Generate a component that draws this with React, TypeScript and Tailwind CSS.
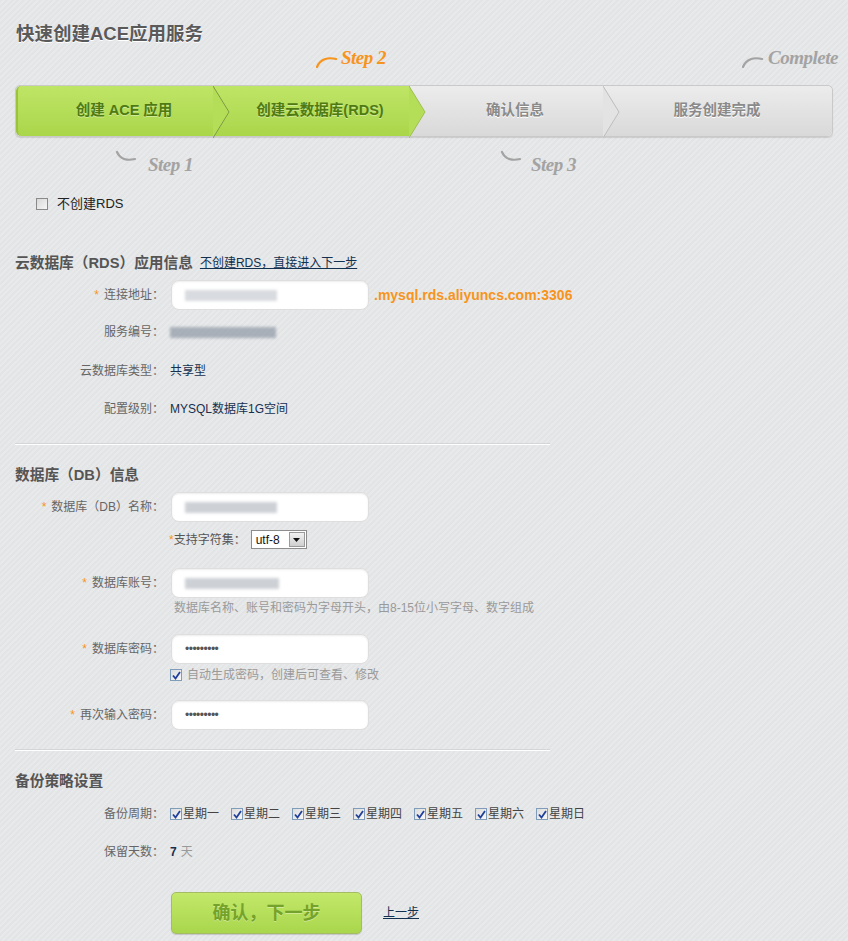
import React from "react";

const Star = () => <span className="text-[#f7941d] mr-[5px]">*</span>;

function Box({ checked }: { checked?: boolean }) {
  return (
    <span className="inline-flex items-center justify-center w-[12px] h-[12px] border border-[#7f9db9] bg-gradient-to-br from-[#dcdcdc] to-[#f8f8f8] shrink-0">
      {checked && (
        <svg width="9" height="9" viewBox="0 0 9 9">
          <path d="M1 4.5 L3.5 7.5 L8 1" fill="none" stroke="#21409a" strokeWidth="1.8" />
        </svg>
      )}
    </span>
  );
}

function Input({ children }: { children?: React.ReactNode }) {
  return (
    <div className="ml-px w-[198px] h-[30px] rounded-[8px] bg-white border border-[#dedede] shadow-[inset_0_1px_2px_rgba(0,0,0,0.08)] flex items-center px-[13px]">
      {children}
    </div>
  );
}

function Row({ label, req, className, children }: { label: string; req?: boolean; className?: string; children: React.ReactNode }) {
  return (
    <div className={"flex items-center " + (className || "")}>
      <div className="w-[164px] text-right text-[12px] text-[#666] whitespace-nowrap">
        {req && <Star />}
        {label}
      </div>
      <div className="ml-[6px] flex items-center text-[12px]">{children}</div>
    </div>
  );
}

const Blur = ({ w, c = "#9aa0a8" }: { w: number; c?: string }) => (
  <div className="h-[11px] blur-[1.5px] opacity-70" style={{ width: w, backgroundColor: c }} />
);

const Dots = () => <span className="text-[#555] text-[12px] tracking-[-0.5px] leading-none">•••••••••</span>;

function Chevron({ fill, stroke }: { fill: string; stroke: string }) {
  return (
    <svg className="absolute top-0 right-[-16px] z-10" width="17" height="52" viewBox="0 0 17 52">
      <polygon points="0,0 16,26 0,52" fill={fill} />
      <polyline points="0,0 16,26 0,52" fill="none" stroke={stroke} strokeWidth="1" />
    </svg>
  );
}

const hand = "font-['Liberation_Serif',serif] italic font-bold whitespace-nowrap tracking-[-0.5px]";

export default function App() {
  const days = ["星期一", "星期二", "星期三", "星期四", "星期五", "星期六", "星期日"];
  return (
    <div className="min-h-screen w-full bg-[repeating-linear-gradient(135deg,#e3e4e5_0px,#e3e4e5_2px,#e8e9ea_2px,#e8e9ea_4px)] font-['Liberation_Sans','Noto_Sans_CJK_SC',sans-serif] text-[#333] pb-[10px]">
      <h1 className="pl-[16px] pt-[22px] leading-[24px] text-[18.5px] font-bold text-[#5a5a5a] [text-shadow:0_1px_0_#fff]">
        快速创建ACE应用服务
      </h1>

      {/* top annotations */}
      <div className="flex h-[39px] items-start pt-[2px]">
        <div className="ml-[316px] w-[80px] flex items-end">
          <svg width="22" height="14" viewBox="0 0 22 14" className="shrink-0">
            <path d="M1 13 C4 5 12 3 20 5" fill="none" stroke="#f7941d" strokeWidth="2.2" strokeLinecap="round" />
          </svg>
          <span className={hand + " ml-[3px] text-[19px] leading-[20px] text-[#f7941d]"}>Step 2</span>
        </div>
        <div className="ml-[346px] flex items-end">
          <svg width="22" height="14" viewBox="0 0 22 14" className="shrink-0">
            <path d="M1 13 C4 5 12 3 20 5" fill="none" stroke="#a3a3a3" strokeWidth="2.2" strokeLinecap="round" />
          </svg>
          <span className={hand + " ml-[4px] text-[19px] leading-[20px] text-[#a3a3a3]"}>Complete</span>
        </div>
      </div>

      {/* step bar */}
      <div className="mx-[15px] h-[52px] flex rounded-[5px] border border-[#c9c9c9] shadow-[0_1px_1px_rgba(0,0,0,0.12)] text-[14.5px] font-bold">
        <div className="relative w-[198px] rounded-l-[5px] bg-gradient-to-b from-[#bfe566] to-[#aad64a] border-l-2 border-[#9cc23e] flex items-center justify-center pl-[16px] text-[#4f7a12] [text-shadow:0_1px_0_rgba(255,255,255,0.4)]">
          创建 ACE 应用
          <Chevron fill="#b4de58" stroke="#7f9a45" />
        </div>
        <div className="relative w-[196px] bg-gradient-to-b from-[#bfe566] to-[#aad64a] flex items-center justify-center pl-[16px] text-[#4f7a12] [text-shadow:0_1px_0_rgba(255,255,255,0.4)]">
          创建云数据库(RDS)
          <Chevron fill="#b4de58" stroke="#9fbf55" />
        </div>
        <div className="relative w-[194px] bg-gradient-to-b from-[#ececec] to-[#d9d9d9] flex items-center justify-center pl-[16px] text-[#8a8a8a] [text-shadow:0_1px_0_#fff]">
          确认信息
          <Chevron fill="#e3e3e3" stroke="#bdbdbd" />
        </div>
        <div className="flex-1 rounded-r-[5px] bg-gradient-to-b from-[#ececec] to-[#d9d9d9] flex items-center justify-center pl-[16px] pr-[18px] text-[#8a8a8a] [text-shadow:0_1px_0_#fff]">
          服务创建完成
        </div>
      </div>

      {/* bottom annotations */}
      <div className="flex h-[39px] items-start pt-[13px]">
        <div className="ml-[115px] w-[85px] flex items-start">
          <svg width="22" height="14" viewBox="0 0 22 14" className="shrink-0">
            <path d="M2 2 C5 9 12 11 20 9" fill="none" stroke="#a3a3a3" strokeWidth="2.2" strokeLinecap="round" />
          </svg>
          <span className={hand + " ml-[11px] mt-[5px] text-[19px] leading-[20px] text-[#a3a3a3]"}>Step 1</span>
        </div>
        <div className="ml-[300px] flex items-start">
          <svg width="22" height="14" viewBox="0 0 22 14" className="shrink-0">
            <path d="M2 2 C5 9 12 11 20 9" fill="none" stroke="#a3a3a3" strokeWidth="2.2" strokeLinecap="round" />
          </svg>
          <span className={hand + " ml-[9px] mt-[5px] text-[19px] leading-[20px] text-[#a3a3a3]"}>Step 3</span>
        </div>
      </div>

      {/* no RDS */}
      <div className="mt-[20px] h-[16px] flex items-center pl-[36px] text-[13px] text-[#222]">
        <span className="inline-block w-[12px] h-[12px] border border-[#8a8a8a] bg-gradient-to-br from-[#d8d8d8] to-[#f6f6f6]" />
        <span className="ml-[9px]">不创建RDS</span>
      </div>

      {/* RDS section */}
      <div className="mt-[41px] h-[20px] flex items-center pl-[15px]">
        <span className="text-[14.7px] font-bold text-[#555]">云数据库（RDS）应用信息</span>
        <a href="#" className="ml-[7px] text-[12px] text-[#12304f] underline">不创建RDS，直接进入下一步</a>
      </div>
      <Row label="连接地址：" req className="mt-[7px] h-[30px]">
        <Input>
          <Blur w={92} c="#c8ccd2" />
        </Input>
        <span className="ml-[5px] text-[14px] font-bold text-[#f7941d]">.mysql.rds.aliyuncs.com:3306</span>
      </Row>
      <Row label="服务编号：" className="mt-[12px] h-[20px]">
        <Blur w={106} c="#8e98a6" />
      </Row>
      <Row label="云数据库类型：" className="mt-[19px] h-[20px]">
        <span className="text-[#16304f]">共享型</span>
      </Row>
      <Row label="配置级别：" className="mt-[18px] h-[20px]">
        <span className="text-[#16304f]">MYSQL数据库1G空间</span>
      </Row>

      <div className="mt-[24px] ml-[15px] w-[535px] h-[2px] border-t border-[#d4d5d6] bg-white" />

      {/* DB section */}
      <div className="mt-[20px] h-[20px] flex items-center pl-[15px]">
        <span className="text-[14.7px] font-bold text-[#555]">数据库（DB）信息</span>
      </div>
      <Row label="数据库（DB）名称：" req className="mt-[7px] h-[30px]">
        <Input>
          <Blur w={92} c="#b9bec5" />
        </Input>
      </Row>
      <div className="mt-[8px] h-[19px] flex items-center pl-[169px] text-[12px] text-[#555]">
        <span className="text-[#f7941d]">*</span>
        <span>支持字符集：</span>
        <div className="ml-[5px] w-[56px] h-[19px] bg-white border border-[#8d8d8d] flex items-center">
          <span className="flex-1 pl-[4px] text-[12px] text-[#111]">utf-8</span>
          <span className="w-[16px] h-[15px] mr-px bg-gradient-to-b from-[#f2f2f2] to-[#cfcfcf] border border-[#9a9a9a] flex items-center justify-center">
            <svg width="7" height="4" viewBox="0 0 7 4"><polygon points="0,0 7,0 3.5,4" fill="#111" /></svg>
          </span>
        </div>
      </div>
      <Row label="数据库账号：" req className="mt-[19px] h-[30px]">
        <Input>
          <Blur w={94} c="#b9bec5" />
        </Input>
      </Row>
      <div className="mt-[2px] h-[16px] flex items-center pl-[174px] text-[12px] text-[#9a9a9a]">
        数据库名称、账号和密码为字母开头，由8-15位小写字母、数字组成
      </div>
      <Row label="数据库密码：" req className="mt-[18px] h-[30px]">
        <Input>
          <Dots />
        </Input>
      </Row>
      <div className="mt-[3px] h-[16px] flex items-center pl-[170px] text-[12px] text-[#9a9a9a]">
        <Box checked />
        <span className="ml-[5px]">自动生成密码，创建后可查看、修改</span>
      </div>
      <Row label="再次输入密码：" req className="mt-[17px] h-[30px]">
        <Input>
          <Dots />
        </Input>
      </Row>

      <div className="mt-[19px] ml-[15px] w-[535px] h-[2px] border-t border-[#d4d5d6] bg-white" />

      {/* backup */}
      <div className="mt-[20px] h-[20px] flex items-center pl-[15px]">
        <span className="text-[14.7px] font-bold text-[#555]">备份策略设置</span>
      </div>
      <Row label="备份周期：" className="mt-[13px] h-[20px]">
        <div className="flex items-center gap-[12px]">
          {days.map((d) => (
            <span key={d} className="flex items-center text-[#444]">
              <Box checked />
              <span className="ml-px">{d}</span>
            </span>
          ))}
        </div>
      </Row>
      <Row label="保留天数：" className="mt-[18px] h-[20px]">
        <span className="text-[#16304f] font-bold">7</span>
        <span className="ml-[4px] text-[#9a9a9a]">天</span>
      </Row>

      <div className="mt-[30px] flex items-center pl-[171px]">
        <button className="w-[191px] h-[42px] rounded-[5px] border border-[#a2bd62] bg-gradient-to-b from-[#c3e86a] to-[#a9d64c] shadow-[0_1px_1px_rgba(0,0,0,0.15)] text-[18px] font-bold text-[#74a22a] [text-shadow:0_1px_0_rgba(255,255,255,0.35)]">
          确认，下一步
        </button>
        <a href="#" className="ml-[21px] text-[12px] text-[#12304f] underline">上一步</a>
      </div>
    </div>
  );
}
